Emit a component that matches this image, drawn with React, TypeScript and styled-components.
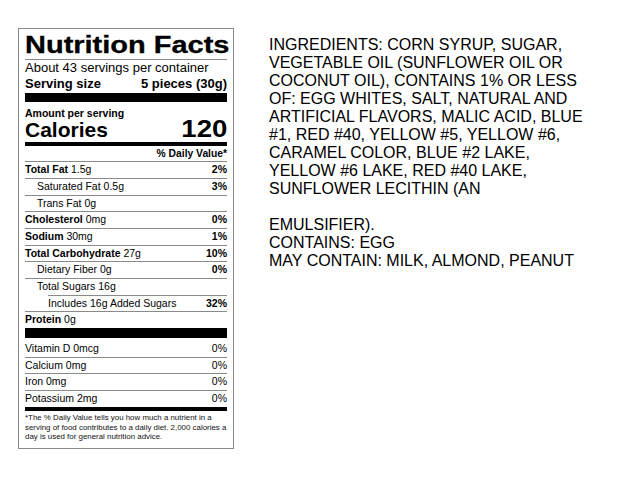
import styled, { createGlobalStyle } from 'styled-components';

const GlobalStyle = createGlobalStyle`
  html, body {
    margin: 0;
    padding: 0;
    background: #ffffff;
  }
  body {
    font-family: "Liberation Sans", Arial, sans-serif;
    color: #000000;
  }
`;

const Page = styled.div`
  width: 624px;
  height: 492px;
  display: flex;
  align-items: flex-start;
  gap: 35px;
  padding: 28px 0 0 18px;
  box-sizing: border-box;
`;

const Label = styled.div`
  width: 216px;
  box-sizing: border-box;
  border: 1px solid #8a8a8a;
  padding: 2px 6px 6px;
`;

const TitleBox = styled.div`
  height: 28px;
  border-bottom: 1px solid #8a8a8a;
  overflow: visible;
`;

// the label's title face is an extended heavy sans, so stretch Arial bold
const Title = styled.h1`
  margin: 0;
  display: inline-block;
  font-size: 23px;
  font-weight: 700;
  line-height: 28px;
  white-space: nowrap;
  transform: scaleX(1.26);
  transform-origin: left center;
  -webkit-text-stroke: 0.3px #000;
`;

const Servings = styled.div`
  font-size: 13px;
  line-height: 16px;
`;

const ServingSize = styled.div`
  display: flex;
  justify-content: space-between;
  font-size: 13px;
  font-weight: 700;
  line-height: 16px;
  padding-bottom: 1px;
`;

const Bar = styled.div<{ $h: number }>`
  height: ${(p) => p.$h}px;
  background: #000000;
`;

const AmountLabel = styled.div`
  font-size: 10.5px;
  font-weight: 700;
  line-height: 12px;
  padding-top: 4.5px;
`;

const CaloriesRow = styled.div`
  display: flex;
  justify-content: space-between;
  align-items: baseline;
  font-weight: 700;
  line-height: 20px;
  padding-bottom: 2.8px;
`;

const CaloriesWord = styled.span`
  font-size: 21px;
`;

const CaloriesValue = styled.span`
  display: inline-block;
  font-size: 23px;
  transform: scaleX(1.2);
  transform-origin: right center;
`;

const DailyHeader = styled.div`
  text-align: right;
  font-size: 10.3px;
  font-weight: 700;
  line-height: 15px;
`;

const Row = styled.div<{ $indent?: number; $top?: number }>`
  display: flex;
  justify-content: space-between;
  font-size: 10.5px;
  line-height: 15.67px;
  margin-left: ${(p) => (p.$indent === 2 ? 23 : 0)}px;
  padding-left: ${(p) => (p.$indent === 1 ? 12 : 0)}px;
  padding-top: ${(p) => p.$top ?? 0}px;
  border-top: ${(p) => (p.$top ? 'none' : '1px solid #8a8a8a')};
`;

const Pct = styled.span<{ $bold?: boolean }>`
  font-weight: ${(p) => (p.$bold ? 700 : 400)};
`;

const Footnote = styled.div`
  font-size: 7.9px;
  line-height: 9.5px;
  padding-top: 2.5px;
  color: #111111;
  white-space: nowrap;
`;

const Ingredients = styled.div`
  font-size: 16px;
  line-height: 18px;
  white-space: pre-line;
  padding-top: 8px;
  color: #000000;
`;

const nutrients = [
  { bold: 'Total Fat', rest: '1.5g', pct: '2%', indent: 0 },
  { bold: '', rest: 'Saturated Fat 0.5g', pct: '3%', indent: 1 },
  { bold: '', rest: 'Trans Fat 0g', pct: '', indent: 1 },
  { bold: 'Cholesterol', rest: '0mg', pct: '0%', indent: 0 },
  { bold: 'Sodium', rest: '30mg', pct: '1%', indent: 0 },
  { bold: 'Total Carbohydrate', rest: '27g', pct: '10%', indent: 0 },
  { bold: '', rest: 'Dietary Fiber 0g', pct: '0%', indent: 1 },
  { bold: '', rest: 'Total Sugars 16g', pct: '', indent: 1 },
  { bold: '', rest: 'Includes 16g Added Sugars', pct: '32%', indent: 2 },
  { bold: 'Protein', rest: '0g', pct: '', indent: 0 },
];

const vitamins = [
  { name: 'Vitamin D 0mcg', pct: '0%' },
  { name: 'Calcium 0mg', pct: '0%' },
  { name: 'Iron 0mg', pct: '0%' },
  { name: 'Potassium 2mg', pct: '0%' },
];

const ingredientsText = `INGREDIENTS: CORN SYRUP, SUGAR,
VEGETABLE OIL (SUNFLOWER OIL OR
COCONUT OIL), CONTAINS 1% OR LESS
OF: EGG WHITES, SALT, NATURAL AND
ARTIFICIAL FLAVORS, MALIC ACID, BLUE
#1, RED #40, YELLOW #5, YELLOW #6,
CARAMEL COLOR, BLUE #2 LAKE,
YELLOW #6 LAKE, RED #40 LAKE,
SUNFLOWER LECITHIN (AN

EMULSIFIER).
CONTAINS: EGG
MAY CONTAIN: MILK, ALMOND, PEANUT`;

export default function App() {
  return (
    <>
      <GlobalStyle />
      <Page>
        <Label>
          <TitleBox>
            <Title>Nutrition Facts</Title>
          </TitleBox>
          <Servings>About 43 servings per container</Servings>
          <ServingSize>
            <span>Serving size</span>
            <span>5 pieces (30g)</span>
          </ServingSize>
          <Bar $h={9} />
          <AmountLabel>Amount per serving</AmountLabel>
          <CaloriesRow>
            <CaloriesWord>Calories</CaloriesWord>
            <CaloriesValue>120</CaloriesValue>
          </CaloriesRow>
          <Bar $h={4} />
          <DailyHeader>% Daily Value*</DailyHeader>
          {nutrients.map((n) => (
            <Row key={n.rest} $indent={n.indent}>
              <span>
                {n.bold && <b>{n.bold} </b>}
                {n.rest}
              </span>
              <Pct $bold>{n.pct}</Pct>
            </Row>
          ))}
          <Bar $h={10} />
          {vitamins.map((v, i) => (
            <Row key={v.name} $top={i === 0 ? 3 : 0}>
              <span>{v.name}</span>
              <Pct>{v.pct}</Pct>
            </Row>
          ))}
          <Bar $h={4} />
          <Footnote>
            *The % Daily Value tells you how much a nutrient in a
            <br />
            serving of food contributes to a daily diet. 2,000 calories a
            <br />
            day is used for general nutrition advice.
          </Footnote>
        </Label>
        <Ingredients>{ingredientsText}</Ingredients>
      </Page>
    </>
  );
}
